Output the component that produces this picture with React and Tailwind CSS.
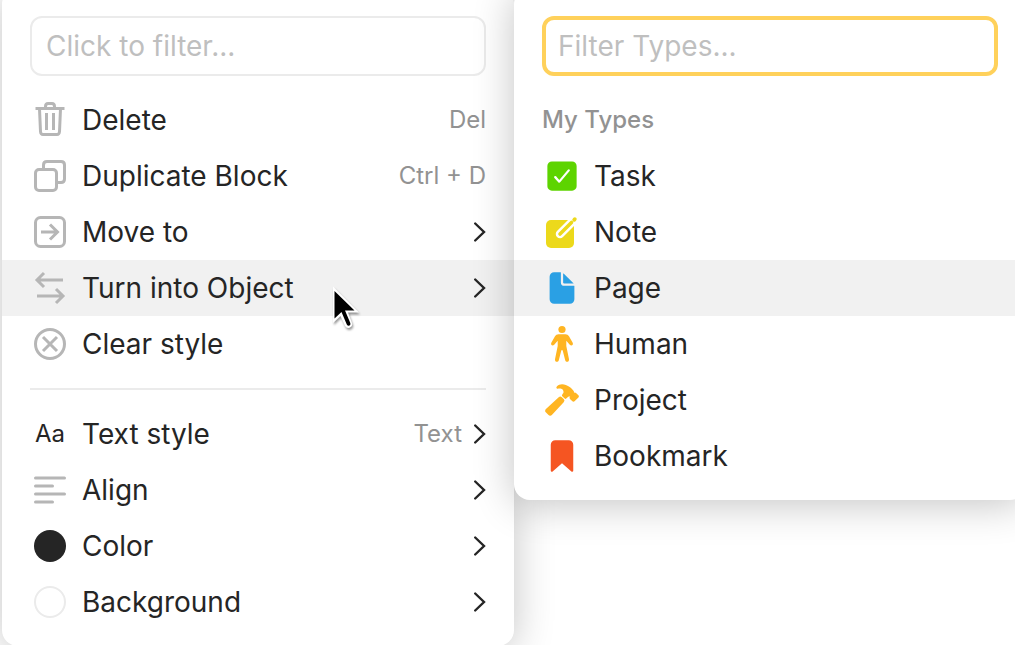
import { IoCheckbox, IoDocument, IoHammer, IoBookmark } from "react-icons/io5";

function Stroke({ children }) {
  return (
    <svg aria-hidden="true" className="size-10 text-[#b6b6b6]" viewBox="0 0 40 40" fill="none" stroke="currentColor" strokeWidth="3">
      {children}
    </svg>
  );
}

const TrashIcon = () => (
  <Stroke>
    <path d="M5.5 8.5H34.5" />
    <path d="M15.5 8V6.5Q15.5 3.5 18 3.5H22Q24.5 3.5 24.5 6.5V8" />
    <path d="M9.5 9L10.5 31.5Q10.7 34.500 13 34.500H27Q29.300 34.500 29.500 31.500L30.500 9" />
    <path d="M16.500 13V30M23.500 13V30" />
  </Stroke>
);

const DuplicateIcon = () => (
  <Stroke>
    <rect x="5.500" y="13.500" width="21" height="21" rx="3.500" />
    <path d="M13.500 13V9Q13.500 5.500 17 5.500H31Q34.500 5.500 34.500 9V23Q34.500 26.500 31 26.500H27" />
  </Stroke>
);

const MoveIcon = () => (
  <Stroke>
    <rect x="5.500" y="5.500" width="29" height="29" rx="5" />
    <path d="M11 20H27M20 12.500L27.500 20L20 27.500" />
  </Stroke>
);

const SwapIcon = () => (
  <Stroke>
    <path d="M33 12H7M14 5L7 12L14 19" />
    <path d="M7 28H33M26 21L33 28L26 35" />
  </Stroke>
);

const ClearIcon = () => (
  <Stroke>
    <circle cx="20" cy="20" r="14.500" />
    <path d="M13 13L27 27M27 13L13 27" />
  </Stroke>
);

const AlignIcon = () => (
  <Stroke>
    <path strokeLinecap="round" d="M5.500 8H34.500M5.500 16H22.500M5.500 24H34.500M5.500 32H22.500" />
  </Stroke>
);

const TextIcon = () => <span className="text-2xl">Aa</span>;
const ColorIcon = () => <span className="size-8 rounded-full bg-[#252525]" />;
const BackgroundIcon = () => <span className="size-8 rounded-full border-2 border-[#ebebeb]" />;

const NoteIcon = () => (
  <svg aria-hidden="true" className="size-10 text-[#ecd91b]" viewBox="0 0 40 40">
    <rect x="4" y="8" width="28" height="28" rx="5" fill="currentColor" />
    <path d="M18 22L31 9" stroke="#fff" strokeWidth="8.500" strokeLinecap="round" />
    <path d="M18 22L29.500 10.500" stroke="currentColor" strokeWidth="3.600" strokeLinecap="round" />
    <path d="M32.200 7.800L32.800 7.200" stroke="currentColor" strokeWidth="3.800" strokeLinecap="round" />
  </svg>
);

const HumanIcon = () => (
  <svg aria-hidden="true" className="size-10 text-[#ffb522]" viewBox="0 0 40 40" fill="currentColor">
    <circle cx="20" cy="5.500" r="3.600" />
    <path d="M16.500 10.200H23.500C25 10.200 26.200 11 27 12.200L30.700 18.700C31.700 20.700 29.500 22.500 27.800 20.800L24.300 16.800V22L27 35.200C27.400 38 24 38.800 23.200 36.200L20.700 26.500C20.500 25.700 19.500 25.700 19.300 26.500L16.800 36.200C16 38.800 12.600 38 13 35.200L15.700 22V16.800L12.200 20.800C10.500 22.500 8.300 20.700 9.300 18.700L13 12.200C13.800 11 15 10.200 16.500 10.200Z" />
  </svg>
);

function Chevron() {
  return (
    <svg aria-hidden="true" className="h-6 w-3" viewBox="0 0 12 24" fill="none" stroke="#252525" strokeWidth="2.400" strokeLinecap="round">
      <path d="M1.200 3.500L10 12L1.200 20.500" />
    </svg>
  );
}

function Cursor() {
  return (
    <svg aria-hidden="true" className="absolute top-6 left-[329px] z-10 h-12 w-8 drop-shadow-[1px_2px_1px_rgba(0,0,0,0.4)]" viewBox="0 0 32 48">
      <path d="M2 2.500V39L9.500 32L14 42Q16 45 19 43.500Q22 42 21 39L17 28.500H28Z" fill="#fff" />
      <path d="M3.500 7V34.500L10.500 28L15.800 40.500Q17 42.500 18.500 41.500Q20 40.800 19.300 39L14 26.500H23.500Z" fill="#000" />
    </svg>
  );
}

const actions = [
  { label: "Delete", Icon: TrashIcon, hint: "Del" },
  { label: "Duplicate Block", Icon: DuplicateIcon, hint: "Ctrl + D" },
  { label: "Move to", Icon: MoveIcon, arrow: true },
  { label: "Turn into Object", Icon: SwapIcon, arrow: true, active: true, cursor: true },
  { label: "Clear style", Icon: ClearIcon },
];

const styles = [
  { label: "Text style", Icon: TextIcon, hint: "Text", arrow: true },
  { label: "Align", Icon: AlignIcon, arrow: true },
  { label: "Color", Icon: ColorIcon, arrow: true },
  { label: "Background", Icon: BackgroundIcon, arrow: true },
];

const types = [
  { label: "Task", Icon: () => <IoCheckbox className="size-9 text-[#5dd400]" /> },
  { label: "Note", Icon: NoteIcon },
  { label: "Page", Icon: () => <IoDocument className="size-9 text-[#2aa0e4]" />, active: true },
  { label: "Human", Icon: HumanIcon },
  { label: "Project", Icon: () => <IoHammer className="size-9 text-[#ffb522]" /> },
  { label: "Bookmark", Icon: () => <IoBookmark className="size-9 text-[#f55522]" /> },
];

function Row({ label, Icon, hint, arrow, active, cursor }) {
  return (
    <li className="relative">
      <button type="button" className={`flex h-14 w-full items-center gap-3 px-7 text-left ${active ? "bg-[#f1f1f1]" : ""}`}>
        <span className="flex size-10 shrink-0 items-center justify-center"><Icon /></span>
        <span className="flex-1 whitespace-nowrap text-[28px]">{label}</span>
        {hint && <span className="text-2xl text-[#929292]">{hint}</span>}
        {arrow && <Chevron />}
      </button>
      {cursor && <Cursor />}
    </li>
  );
}

export default function App() {
  return (
    <main className="min-h-screen overflow-hidden bg-white font-['Inter',sans-serif] text-[#252525]">
      <div className="-mt-3 -mr-[11px] ml-0.5 flex items-start">
        <section aria-label="Block actions" className="min-w-0 flex-1 rounded-2xl bg-white pt-7 pb-4 shadow-[0_4px_40px_rgba(0,0,0,0.24)]">
          <div className="px-7 pb-4">
            <input
              type="text"
              aria-label="Filter actions"
              placeholder="Click to filter..."
              className="block h-15 w-full rounded-xl border-2 border-[#ebebeb] px-3.5 text-[28px] outline-none placeholder:text-[#bfbfbf]"
            />
          </div>
          <ul>{actions.map((item) => <Row key={item.label} {...item} />)}</ul>
          <hr className="mx-7 my-4 border-t-2 border-[#ebebeb]" />
          <ul>{styles.map((item) => <Row key={item.label} {...item} />)}</ul>
        </section>
        <section aria-label="Object types" className="relative min-w-0 flex-1 rounded-2xl bg-white pt-7 pb-4 shadow-[0_4px_40px_rgba(0,0,0,0.24)]">
          <div className="px-7 pb-4">
            <input
              type="text"
              aria-label="Filter types"
              placeholder="Filter Types..."
              className="block h-15 w-full rounded-xl border-4 border-[#ffd15b] px-3 text-[28px] outline-none placeholder:text-[#bfbfbf]"
            />
          </div>
          <h2 className="flex h-14 items-center px-7 text-2xl font-medium text-[#929292]">My Types</h2>
          <ul>{types.map((item) => <Row key={item.label} {...item} />)}</ul>
        </section>
      </div>
    </main>
  );
}
